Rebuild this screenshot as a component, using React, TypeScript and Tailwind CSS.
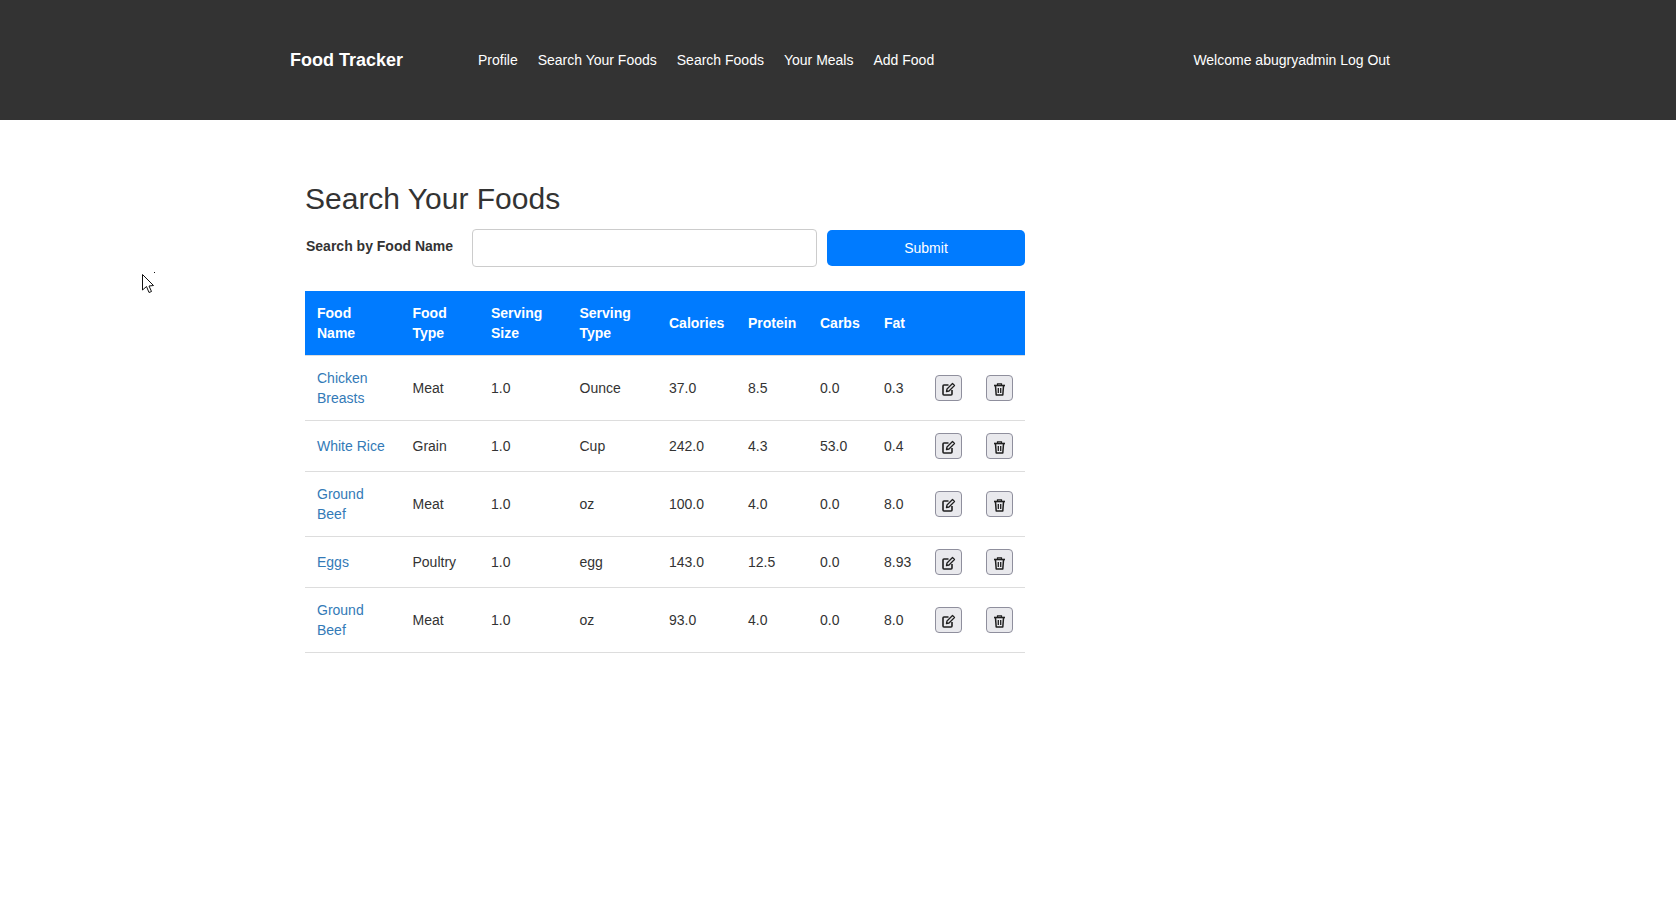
const foods = [
  { name: 'Chicken Breasts', type: 'Meat', size: '1.0', serving: 'Ounce', calories: '37.0', protein: '8.5', carbs: '0.0', fat: '0.3' },
  { name: 'White Rice', type: 'Grain', size: '1.0', serving: 'Cup', calories: '242.0', protein: '4.3', carbs: '53.0', fat: '0.4' },
  { name: 'Ground Beef', type: 'Meat', size: '1.0', serving: 'oz', calories: '100.0', protein: '4.0', carbs: '0.0', fat: '8.0' },
  { name: 'Eggs', type: 'Poultry', size: '1.0', serving: 'egg', calories: '143.0', protein: '12.5', carbs: '0.0', fat: '8.93' },
  { name: 'Ground Beef', type: 'Meat', size: '1.0', serving: 'oz', calories: '93.0', protein: '4.0', carbs: '0.0', fat: '8.0' },
];

const navLinks = ['Profile', 'Search Your Foods', 'Search Foods', 'Your Meals', 'Add Food'];

const headers = [
  { label: 'Food Name', width: 'w-[95.5px]' },
  { label: 'Food Type', width: 'w-[78.5px]' },
  { label: 'Serving Size', width: 'w-[88.5px]' },
  { label: 'Serving Type', width: 'w-[89.5px]' },
  { label: 'Calories', width: 'w-[79px]' },
  { label: 'Protein', width: 'w-[72px]' },
  { label: 'Carbs', width: 'w-[64px]' },
  { label: 'Fat', width: 'w-[51px]' },
  { label: '', width: 'w-[51px]' },
  { label: '', width: 'w-[51px]' },
];

const EditIcon = () => (
  <svg width="14" height="14" viewBox="0 0 14 14" fill="none" stroke="#1f1f1f" strokeLinejoin="round">
    <path d="M6.5 3H2a1 1 0 0 0-1 1v8a1 1 0 0 0 1 1h7a1 1 0 0 0 1-1V8" strokeWidth="1.6" />
    <path d="M4.5 9.5L5 7L10.5 1.5L12.5 3.5L7 9Z" strokeWidth="1.3" />
  </svg>
);

const TrashIcon = () => (
  <svg width="14" height="14" viewBox="0 0 14 14" fill="none" stroke="#1f1f1f">
    <path d="M1 3.5H12" strokeWidth="1.6" />
    <path d="M4.5 3.5V1.8H8.5V3.5" strokeWidth="1.2" />
    <path d="M2.5 4L3.2 13H9.8L10.5 4" strokeWidth="1.5" strokeLinejoin="round" />
    <path d="M5.3 6V11M7.7 6V11" strokeWidth="1.3" />
  </svg>
);

const IconButton = ({ children }: { children: React.ReactNode }) => (
  <button className="flex items-center justify-center w-[27px] h-[26px] pt-[2px] bg-[#e9e9ed] border border-[#8f8f9d] rounded-[4px]">
    {children}
  </button>
);

const App = () => {
  return (
    <div className="relative min-h-[897px] bg-white text-[14px] leading-[20px] text-[#333] font-['Liberation_Sans',Arial,sans-serif]">
      <nav className="flex items-center h-[120px] pl-[290px] pr-[286px] bg-[#333] text-white">
        <a className="w-[188px] text-[18px] font-bold">Food Tracker</a>
        <ul className="flex gap-5">
          {navLinks.map((link) => (
            <li key={link}>{link}</li>
          ))}
        </ul>
        <div className="ml-auto">Welcome abugryadmin Log Out</div>
      </nav>

      <main className="ml-[305px] w-[720px]">
        <h1 className="mt-[62px] text-[30px] leading-[33px] font-normal">Search Your Foods</h1>
        <form className="flex items-center mt-[14px]">
          <label className="w-[167px] pl-px pb-[4px] font-bold">Search by Food Name</label>
          <input className="w-[345px] h-[38px] px-3 border border-[#ccc] rounded-[4px]" />
          <button type="button" className="ml-[10px] w-[198px] h-[36px] bg-[#007bff] text-white rounded-[5px]">
            Submit
          </button>
        </form>

        <table className="mt-[24px] w-[720px] table-fixed border-collapse">
          <thead className="bg-[#007bff] text-white border-b border-[#ddd]">
            <tr>
              {headers.map((h, i) => (
                <th key={i} className={`${h.width} p-3 text-left font-bold`}>{h.label}</th>
              ))}
            </tr>
          </thead>
          <tbody>
            {foods.map((food, i) => (
              <tr key={i} className="border-b border-[#ddd]">
                <td className="p-3 text-[#337ab7]">{food.name}</td>
                <td className="p-3">{food.type}</td>
                <td className="p-3">{food.size}</td>
                <td className="p-3">{food.serving}</td>
                <td className="p-3">{food.calories}</td>
                <td className="p-3">{food.protein}</td>
                <td className="p-3">{food.carbs}</td>
                <td className="p-3">{food.fat}</td>
                <td className="p-3"><IconButton><EditIcon /></IconButton></td>
                <td className="p-3"><IconButton><TrashIcon /></IconButton></td>
              </tr>
            ))}
          </tbody>
        </table>
      </main>

      {/* mouse pointer captured in the screenshot */}
      <svg className="absolute left-[141px] top-[270px]" width="16" height="24" viewBox="0 0 16 24">
        <path d="M1.5 4.5 L1.5 20 L5.5 16.5 L8 22.5 L10.5 21.5 L8 16 L12.5 15.5 Z" fill="#fff" stroke="#111" strokeWidth="1" />
        <rect x="13" y="2" width="1" height="1" fill="#111" />
      </svg>
    </div>
  );
};

export default App;
